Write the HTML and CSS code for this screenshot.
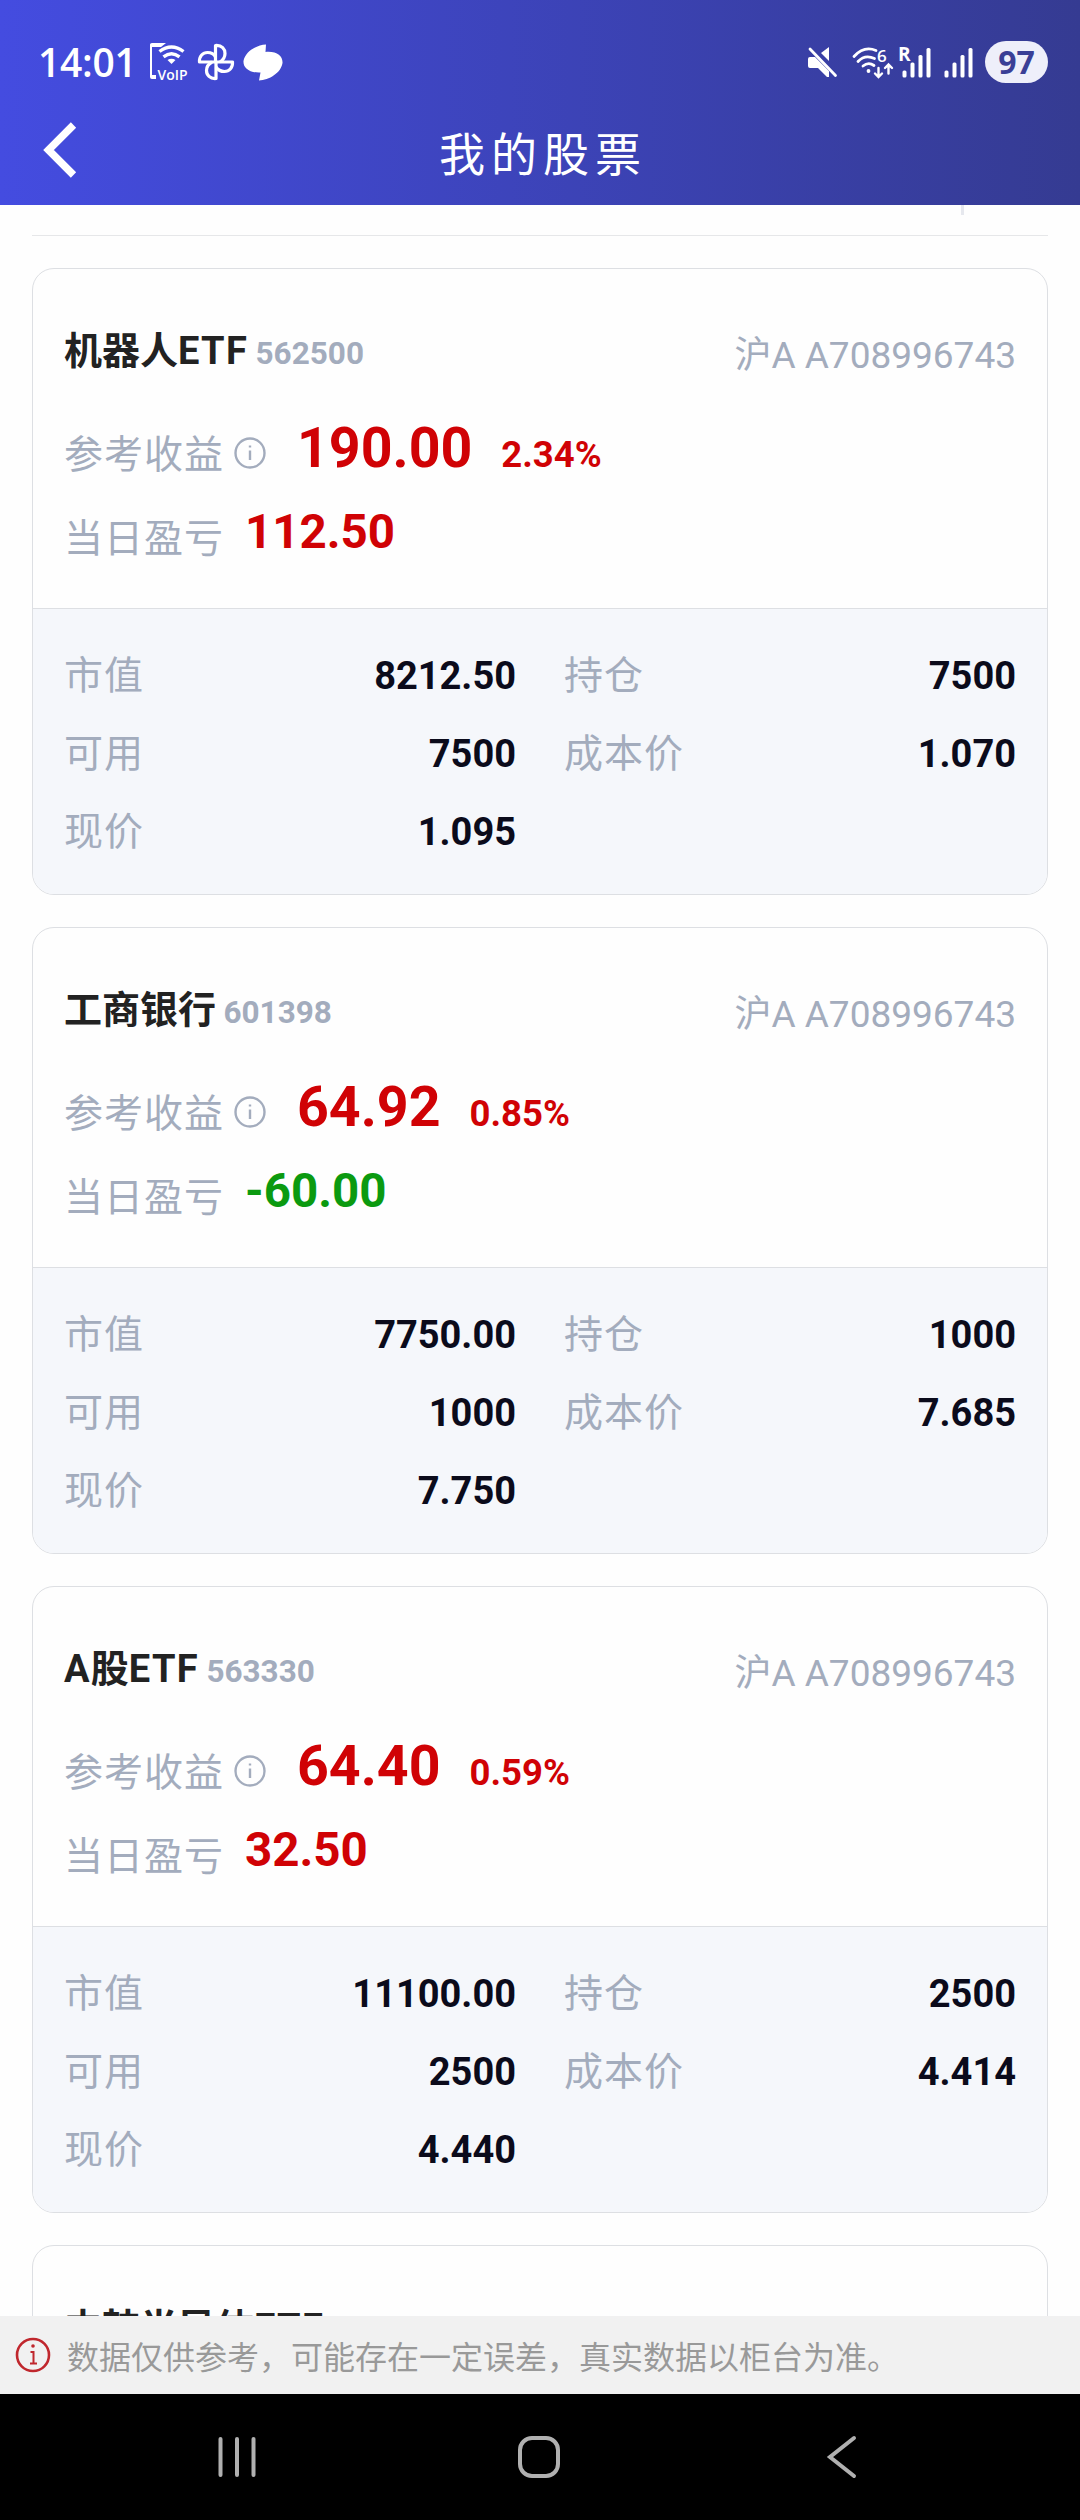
FILE: index.html
```html
<!DOCTYPE html>
<html lang="zh-CN">
<head>
  <meta charset="UTF-8">
  <meta name="viewport" content="width=device-width, initial-scale=1.0">
  <title>我的股票</title>
  <link rel="stylesheet" href="styles.css">
</head>
<body>
  <header class="header">
    <div class="status-bar">
      <div class="status-left">
        <span class="time">14:01</span>
        <svg class="icon-voip" width="40" height="40" viewBox="0 0 40 40">
          <path d="M1 2.5Q1 1 3 1H17L12 5H3V33H7V37H3Q1 37 1 35Z" fill="#fff"/>
          <path d="M10.5 9.5Q22.5 0.5 34.5 9.5M14.5 14.8Q22.5 8.5 30.5 14.8" fill="none" stroke="#fff" stroke-width="3.4"/>
          <path d="M18.5 18Q22.5 15.5 26.5 18L22.5 22Z" fill="#fff"/>
          <text x="8.5" y="37.5" textLength="30" lengthAdjust="spacingAndGlyphs">VoIP</text>
        </svg>
        <svg class="icon-fan" width="36" height="38" viewBox="0 0 36 38" fill="none" stroke="#fff" stroke-width="3.2" stroke-linejoin="round">
          <path d="M17.5 19V2.5C24 2 27 6 27 10.5C27 14 25 17 22 19"/>
          <path d="M17.5 19H34.5C35 25 31 28.5 26.5 28.5C23 28.5 20 27 18 24"/>
          <path d="M18 19V35.5C12 36 8.5 32 8.5 27.5C8.5 24 10.5 21 14 19"/>
          <path d="M18 19H1.5C1 13 5 9.5 9.5 9.5C13 9.5 16 11 17.5 14"/>
        </svg>
        <svg class="icon-blob" width="40" height="37" viewBox="0 0 40 37">
          <path d="M23 0.5L22.5 8C34 7 40 12 39.5 19C38 29 26 36 16 36.5L17.5 28.5C6 29 0 24 0.5 17C2 8 13 1 23 0.5Z" fill="#fff"/>
        </svg>
      </div>
      <div class="status-right">
        <svg class="icon-mute" width="30" height="32" viewBox="0 0 30 32">
          <path d="M1 13Q1 11 3 11H8L22 25V31H20L11 22H3Q1 22 1 20ZM22 1V15L14 7Z" fill="#fff"/>
          <path d="M3 3L28.5 29.5" stroke="#fff" stroke-width="2.8" stroke-linecap="round"/>
        </svg>
        <svg class="icon-wifi" width="41" height="32" viewBox="0 0 41 32" fill="none" stroke="#fff" stroke-width="2.8" stroke-linecap="round">
          <path d="M3 10.5Q13 -0.5 25 4.5M7 15.5Q14 8 23.5 12.5M12 20Q17.5 15.5 23 19.5"/>
          <circle cx="17.5" cy="25" r="1.9" fill="#fff" stroke="none"/>
          <path d="M27.5 22V30M24 27.5L27.5 31L31 27.5M37.5 27.5V19.5M34 22L37.5 18.5L41 22" stroke-width="2.4"/>
          <text x="26" y="16" stroke="none">6</text>
        </svg>
        <svg class="icon-signal" width="34" height="32" viewBox="0 0 34 32" fill="#fff">
          <text x="1" y="14.5">R</text>
          <rect x="5.5" y="24.5" width="4" height="7" rx="1.5"/>
          <rect x="13.5" y="16.5" width="4" height="15" rx="1.5"/>
          <rect x="21.5" y="9" width="4" height="22.5" rx="1.5"/>
          <rect x="29.5" y="2" width="4" height="29.5" rx="1.5"/>
        </svg>
        <svg class="icon-signal2" width="30" height="32" viewBox="0 0 30 32" fill="#fff">
          <rect x="1.5" y="24.5" width="4" height="7" rx="1.5"/>
          <rect x="9.5" y="16.5" width="4" height="15" rx="1.5"/>
          <rect x="17.5" y="9" width="4" height="22.5" rx="1.5"/>
          <rect x="25.5" y="2" width="4" height="29.5" rx="1.5"/>
        </svg>
        <span class="battery">97</span>
      </div>
    </div>
    <div class="title-bar">
      <svg class="back" width="36" height="58" viewBox="0 0 36 58">
        <path d="M31.5 4L6.5 29L31.5 54" fill="none" stroke="#fff" stroke-width="7.5"/>
      </svg>
      <h1>我的股票</h1>
    </div>
  </header>

  <main class="list">
    <div class="list-top"><span class="tick"></span></div>

    <section class="card">
      <div class="card-head">
        <div class="name-row">
          <h2>机器人<span class="latin">ETF</span> <span class="code">562500</span></h2>
          <span class="account">沪A A708996743</span>
        </div>
        <div class="profit-row">
          <span class="label">参考收益</span>
          <svg class="info" width="32" height="32" viewBox="0 0 32 32"><circle cx="16" cy="16" r="14.5"/><path d="M16 13.5V23M16 8.5V10.5"/></svg>
          <span class="profit red">190.00</span>
          <span class="rate red">2.34%</span>
        </div>
        <div class="day-row">
          <span class="label">当日盈亏</span>
          <span class="day red">112.50</span>
        </div>
      </div>
      <div class="card-body">
        <div class="item"><span>市值</span><b>8212.50</b></div>
        <div class="item"><span>持仓</span><b>7500</b></div>
        <div class="item"><span>可用</span><b>7500</b></div>
        <div class="item"><span>成本价</span><b>1.070</b></div>
        <div class="item"><span>现价</span><b>1.095</b></div>
      </div>
    </section>

    <section class="card">
      <div class="card-head">
        <div class="name-row">
          <h2>工商银行 <span class="code">601398</span></h2>
          <span class="account">沪A A708996743</span>
        </div>
        <div class="profit-row">
          <span class="label">参考收益</span>
          <svg class="info" width="32" height="32" viewBox="0 0 32 32"><circle cx="16" cy="16" r="14.5"/><path d="M16 13.5V23M16 8.5V10.5"/></svg>
          <span class="profit red">64.92</span>
          <span class="rate red">0.85%</span>
        </div>
        <div class="day-row">
          <span class="label">当日盈亏</span>
          <span class="day green">-60.00</span>
        </div>
      </div>
      <div class="card-body">
        <div class="item"><span>市值</span><b>7750.00</b></div>
        <div class="item"><span>持仓</span><b>1000</b></div>
        <div class="item"><span>可用</span><b>1000</b></div>
        <div class="item"><span>成本价</span><b>7.685</b></div>
        <div class="item"><span>现价</span><b>7.750</b></div>
      </div>
    </section>

    <section class="card">
      <div class="card-head">
        <div class="name-row">
          <h2><span class="latin">A</span>股<span class="latin">ETF</span> <span class="code">563330</span></h2>
          <span class="account">沪A A708996743</span>
        </div>
        <div class="profit-row">
          <span class="label">参考收益</span>
          <svg class="info" width="32" height="32" viewBox="0 0 32 32"><circle cx="16" cy="16" r="14.5"/><path d="M16 13.5V23M16 8.5V10.5"/></svg>
          <span class="profit red">64.40</span>
          <span class="rate red">0.59%</span>
        </div>
        <div class="day-row">
          <span class="label">当日盈亏</span>
          <span class="day red">32.50</span>
        </div>
      </div>
      <div class="card-body">
        <div class="item"><span>市值</span><b>11100.00</b></div>
        <div class="item"><span>持仓</span><b>2500</b></div>
        <div class="item"><span>可用</span><b>2500</b></div>
        <div class="item"><span>成本价</span><b>4.414</b></div>
        <div class="item"><span>现价</span><b>4.440</b></div>
      </div>
    </section>

    <section class="card">
      <div class="card-head">
        <div class="name-row">
          <h2>中韩半导体<span class="latin">ETF</span></h2>
        </div>
      </div>
    </section>
  </main>

  <footer class="notice">
    <svg width="36" height="36" viewBox="0 0 36 36" fill="none" stroke="#c0272d" stroke-width="2.6">
      <circle cx="18" cy="18" r="16"/>
      <path d="M15.5 15H18.5V26M15 26.5H22" stroke-width="2"/>
      <circle cx="18" cy="9" r="1.8" fill="#c0272d" stroke="none"/>
    </svg>
    <span>数据仅供参考，可能存在一定误差，真实数据以柜台为准。</span>
  </footer>

  <nav class="nav-bar">
    <svg width="44" height="46" viewBox="0 0 44 46"><path d="M5.5 5V41M22 5V41M38.5 5V41"/></svg>
    <svg class="home" width="46" height="46" viewBox="0 0 46 46"><rect x="4" y="4" width="38" height="38" rx="12"/></svg>
    <svg width="34" height="46" viewBox="0 0 34 46"><path d="M29 4L5 23L29 42"/></svg>
  </nav>
</body>
</html>
```

FILE: styles.css
```css
* {
  box-sizing: border-box;
}

body {
  margin: 0;
  width: 1080px;
  height: 2520px;
  overflow: hidden;
  display: flex;
  flex-direction: column;
  background: #fefefe;
  font-family: Roboto, "Noto Sans CJK SC", sans-serif;
}

svg {
  display: block;
  flex: none;
  overflow: visible;
}

h1, h2 {
  margin: 0;
}

/* header */
.header {
  height: 205px;
  flex: none;
  background: linear-gradient(to right, #444ce0, #353b92);
  color: #fff;
}

.status-bar {
  display: flex;
  justify-content: space-between;
  height: 106px;
  padding: 20px 32px 0 38px;
}

.status-left,
.status-right {
  display: flex;
  align-items: center;
  height: 84px;
}

.time {
  width: 111px;
  font-family: "Open Sans", sans-serif;
  font-size: 39px;
  font-weight: 600;
  line-height: 40px;
  letter-spacing: -0.3px;
}

.icon-fan {
  margin-left: 9px;
}

.icon-blob {
  margin-left: 9px;
}

.status-bar text {
  font-family: "Open Sans", sans-serif;
  font-weight: 600;
  fill: #fff;
}

.icon-voip text {
  font-size: 14px;
}

.icon-wifi {
  margin-left: 14px;
}

.icon-wifi text {
  font-size: 17px;
}

.status-bar .icon-signal text {
  font-size: 19px;
  font-weight: 700;
}

.icon-signal {
  margin-left: 5px;
}

.icon-signal2 {
  margin-left: 12px;
}

.battery {
  width: 63px;
  height: 42px;
  margin-left: 12px;
  border-radius: 21px;
  background: #eeeffa;
  color: #3a3f96;
  font-family: "Open Sans", sans-serif;
  font-size: 32px;
  font-weight: 700;
  line-height: 42px;
  text-align: center;
}

.title-bar {
  display: grid;
  grid-template-columns: 80px 1fr 80px;
  align-items: center;
  height: 99px;
}

.back {
  margin: -12px 0 0 42px;
}

.title-bar h1 {
  padding: 0 0 9px 6px;
  font-size: 46px;
  font-weight: 400;
  letter-spacing: 6px;
  text-align: center;
}

/* stock list */
.list {
  flex: 1;
  min-height: 0;
  overflow: hidden;
  padding: 0 32px;
}

.list-top {
  display: flex;
  justify-content: flex-end;
  height: 31px;
  margin-bottom: 32px;
  padding-right: 84px;
  border-bottom: 1px solid #e6e7e9;
}

.tick {
  width: 3px;
  height: 10px;
  background: #e6e8ee;
}

.card {
  height: 627px;
  margin-bottom: 32px;
  border: 1px solid #dddfe3;
  border-radius: 22px;
  overflow: hidden;
}

.card-head {
  height: 339px;
  padding: 56px 31px 0;
}

.name-row {
  display: flex;
  justify-content: space-between;
  height: 84px;
}

.name-row h2 {
  font-size: 38px;
  font-weight: 700;
  line-height: 52px;
  color: #222;
  word-spacing: -2px;
}

.latin {
  letter-spacing: 1.3px;
}

.code {
  font-size: 31.5px;
  color: #a3acbd;
}

.account {
  font-size: 37px;
  line-height: 62px;
  color: #a3acbd;
}

.profit-row {
  display: flex;
  height: 84px;
}

.label {
  font-size: 39px;
  line-height: 92px;
  letter-spacing: 1px;
  color: #a3acbd;
}

.info {
  margin: 28px 0 0 10px;
  fill: none;
  stroke: #a3acbd;
  stroke-width: 2.4;
}

.profit {
  margin-left: 31px;
  font-size: 55.5px;
  font-weight: 700;
  line-height: 80px;
}

.rate {
  margin-left: 29px;
  font-size: 36.5px;
  font-weight: 700;
  line-height: 92px;
}

.day-row {
  display: flex;
  height: 84px;
}

.day {
  margin-left: 21px;
  font-size: 47.5px;
  font-weight: 700;
  line-height: 78px;
}

.red {
  color: #d00205;
}

.green {
  color: #0b9a10;
}

.card-body {
  display: grid;
  grid-template-columns: 452px 452px;
  grid-auto-rows: 78px;
  column-gap: 48px;
  height: 286px;
  padding: 28px 31px 0;
  border-top: 1px solid #dddfe3;
  background: #f5f7fb;
}

.item {
  display: flex;
  justify-content: space-between;
  font-size: 38px;
  line-height: 78px;
}

.item span {
  font-size: 39px;
  letter-spacing: 1px;
  color: #a3acbd;
}

.item b {
  color: #0b0b1b;
}

/* bottom notice */
.notice {
  display: flex;
  align-items: center;
  gap: 16px;
  height: 78px;
  flex: none;
  padding: 0 0 1px 15px;
  background: #f1f1f1;
  color: #999;
  font-size: 32px;
}

.nav-bar {
  display: flex;
  justify-content: space-between;
  height: 126px;
  flex: none;
  padding: 40px 221px 0 215px;
  background: #000;
}

.nav-bar svg {
  fill: none;
  stroke: #b0b0b0;
  stroke-width: 4;
  stroke-linecap: round;
}

.nav-bar .home {
  margin-right: 7px;
}
```
